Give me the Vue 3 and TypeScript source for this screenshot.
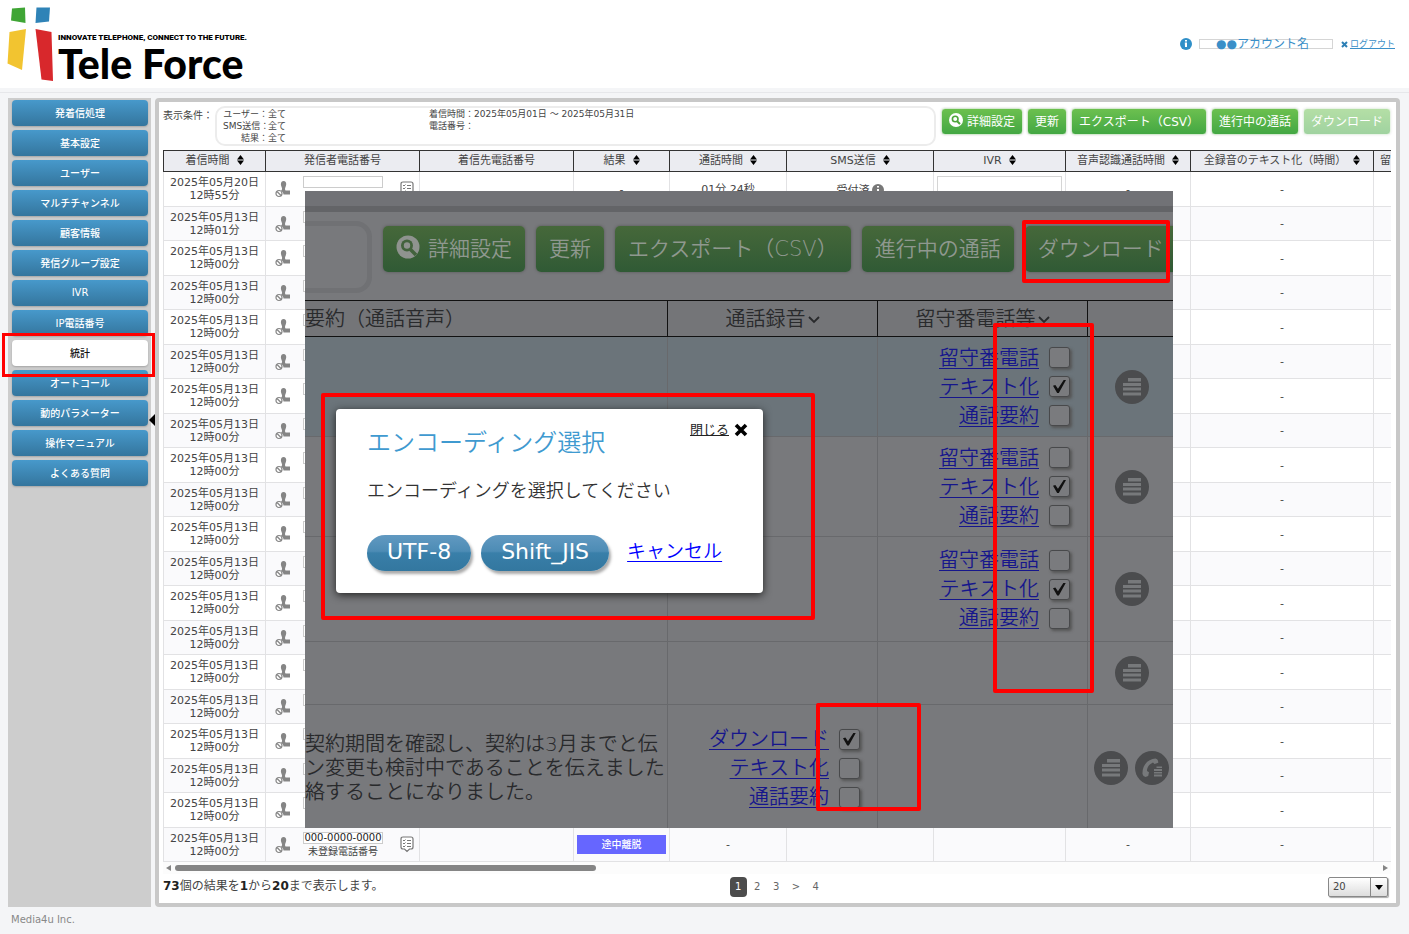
<script setup lang="ts">
import { ref } from 'vue'

interface Column { label: string; cls: string; sort: boolean }
interface CallRow { date: string; time: string; result: string; length: string; speech: string; first?: boolean; last?: boolean }
interface Option { label: string; checked: boolean }
interface PreviewRow { cls: string; summary: string[]; recording: Option[]; voicemail: Option[]; icons: string[] }

const menu: string[] = [
  '発着信処理', '基本設定', 'ユーザー', 'マルチチャンネル', '顧客情報', '発信グループ設定', 'IVR',
  'IP電話番号', '統計', 'オートコール', '動的パラメーター', '操作マニュアル', 'よくある質問',
]
const active = ref('統計')

const columns: Column[] = [
  { label: '着信時間', cls: 'c-time', sort: true },
  { label: '発信者電話番号', cls: 'c-caller', sort: false },
  { label: '着信先電話番号', cls: 'c-callee', sort: false },
  { label: '結果', cls: 'c-result', sort: true },
  { label: '通話時間', cls: 'c-length', sort: true },
  { label: 'SMS送信', cls: 'c-sms', sort: true },
  { label: 'IVR', cls: 'c-ivr', sort: true },
  { label: '音声認識通話時間', cls: 'c-speech', sort: true },
  { label: '全録音のテキスト化（時間）', cls: 'c-text', sort: true },
  { label: '留守番電話等', cls: 'c-voice', sort: false },
]

const empty = { result: '', length: '', speech: '' }
const rows: CallRow[] = [
  { date: '2025年05月20日', time: '12時55分', result: '-', length: '01分 24秒', speech: '-', first: true },
  { date: '2025年05月13日', time: '12時01分', ...empty },
  ...Array.from({ length: 17 }, () => ({ date: '2025年05月13日', time: '12時00分', ...empty })),
  { date: '2025年05月13日', time: '12時00分', result: '途中離脱', length: '-', speech: '-', last: true },
]

const voicemail = (): Option[] => [
  { label: '留守番電話', checked: false },
  { label: 'テキスト化', checked: true },
  { label: '通話要約', checked: false },
]
const preview = ref<PreviewRow[]>([
  { cls: 'r-hit', summary: [], recording: [], voicemail: voicemail(), icons: ['doc'] },
  { cls: 'r-mid', summary: [], recording: [], voicemail: voicemail(), icons: ['doc'] },
  { cls: 'r-tall', summary: [], recording: [], voicemail: voicemail(), icons: ['doc'] },
  { cls: 'r-low', summary: [], recording: [], voicemail: [], icons: ['doc'] },
  {
    cls: 'r-last',
    summary: ['契約期間を確認し、契約は3月までと伝', 'ン変更も検討中であることを伝えました', '絡することになりました。'],
    recording: [
      { label: 'ダウンロード', checked: true },
      { label: 'テキスト化', checked: false },
      { label: '通話要約', checked: false },
    ],
    voicemail: [],
    icons: ['doc', 'tel'],
  },
])
const perPage = ref('20')
</script>

<template>
  <div class="page">
    <header class="header">
      <div class="logo">
        <svg class="logo-mark" width="48" height="76" viewBox="0 0 48 76" aria-hidden="true">
          <path d="M5 3.5 18 2.5 18.500 18 4 15.500Z" fill="#3fa535" />
          <path d="M29.500 2.500H43L42 16.500 28.500 18Z" fill="#2f83b7" />
          <path d="M2.500 27 19 24 15 65 .5 58.500Z" fill="#f2c430" />
          <path d="M28.500 24 44.500 27 46 76 34.500 74.500Z" fill="#d8282c" />
        </svg>
        <div class="logo-text">
          <span class="tagline">INNOVATE TELEPHONE, CONNECT TO THE FUTURE.</span>
          <span class="brand">Tele Force</span>
        </div>
      </div>
      <div class="account">
        <svg width="12" height="12" viewBox="0 0 12 12" aria-hidden="true">
          <circle cx="6" cy="6" r="6" fill="#2f8fc8" />
          <path d="M5 2h2v1.500H5zM4.800 4.500H7V9H5z" fill="#fff" />
        </svg>
        <span class="account-name">●●アカウント名</span>
        <svg class="logout-x" width="7" height="7" viewBox="0 0 7 7" aria-hidden="true">
          <path d="M1 1l5 5M6 1L1 6" stroke="#2c7fb5" stroke-width="2" />
        </svg>
        <a href="#" class="logout">ログアウト</a>
      </div>
    </header>

    <div class="body">
      <nav class="sidebar">
        <button v-for="item in menu" :key="item" type="button" class="menu" :class="{ on: item === active }" @click="active = item">{{ item }}</button>
        <span class="fold"></span>
        <span class="mark mark-menu"></span>
      </nav>

      <main class="main">
        <div class="filter">
          <span class="filter-label">表示条件：</span>
          <div class="filter-box">
            <dl class="conds">
              <dt>ユーザー：</dt><dd>全て</dd>
              <dt>SMS送信：</dt><dd>全て</dd>
              <dt>結果：</dt><dd>全て</dd>
            </dl>
            <dl class="conds">
              <dt>着信時間：</dt><dd>2025年05月01日 ～ 2025年05月31日</dd>
              <dt>電話番号：</dt><dd></dd>
            </dl>
          </div>
          <div class="actions">
            <button type="button" class="green">
              <svg width="14" height="14" viewBox="0 0 14 14" aria-hidden="true">
                <circle cx="7" cy="7" r="7" fill="#fff" />
                <circle cx="6.200" cy="6" r="2.800" fill="none" stroke="#4da53a" stroke-width="1.600" />
                <path d="M8.200 8.200 11 11" stroke="#4da53a" stroke-width="2" />
              </svg>詳細設定
            </button>
            <button type="button" class="green">更新</button>
            <button type="button" class="green">エクスポート（CSV）</button>
            <button type="button" class="green">進行中の通話</button>
            <button type="button" class="green" disabled>ダウンロード</button>
          </div>
        </div>

        <div class="scroller">
          <table class="calls">
            <thead>
              <tr>
                <th v-for="c in columns" :key="c.label" :class="c.cls">
                  {{ c.label }}<svg v-if="c.sort" class="sort" width="7" height="10" viewBox="0 0 7 10" aria-hidden="true"><path d="M3.500 0 7 4.500H0zM0 5.500H7L3.500 10z" fill="#000" /></svg>
                </th>
              </tr>
            </thead>
            <tbody>
              <tr v-for="(r, i) in rows" :key="i">
                <td>{{ r.date }}<br />{{ r.time }}</td>
                <td>
                  <div class="caller">
                    <svg width="16" height="18" viewBox="0 0 16 18" aria-hidden="true">
                      <path d="M8.500 1c2 0 2.900 1.500 2.700 3.500-.2 2-1.200 3-1.200 4.700l.5 1.300h4.500v4H8.500c0-2-1.500-3.300-3-3.500 1.300-.5 1.800-1.500 1.500-2.700C6.500 6.500 5.800 5.600 5.900 4 6 2 7 1 8.500 1z" fill="#858585" />
                      <circle cx="4" cy="13.500" r="3" fill="#fff" stroke="#858585" stroke-width="1.200" />
                      <path d="M2 11.500l4 4" stroke="#858585" stroke-width="1.200" />
                    </svg>
                    <div class="number">
                      <span class="numbox">{{ r.last ? '000-0000-0000' : '' }}</span>
                      <span class="unreg">{{ r.last ? '未登録電話番号' : '' }}</span>
                    </div>
                    <svg width="14" height="17" viewBox="0 0 14 17" aria-hidden="true">
                      <path d="M3 1h8q2 0 2 2v8q0 2-2 2H9.500L7 15.500 4.500 13H3q-2 0-2-2V3q0-2 2-2z" fill="#fff" stroke="#777" stroke-width="1.200" />
                      <path d="M3 4l1 1 1.500-1.500M3 7l1 1 1.500-1.500M3 10l1 1 1.500-1.500M7 4.500h4M7 7.500h4M7 10.500h4" fill="none" stroke="#777" />
                    </svg>
                  </div>
                </td>
                <td></td>
                <td><span v-if="r.last" class="badge">{{ r.result }}</span><template v-else>{{ r.result }}</template></td>
                <td>{{ r.length }}</td>
                <td>
                  <span v-if="r.first" class="sms">受付済
                    <svg width="12" height="12" viewBox="0 0 12 12" aria-hidden="true"><circle cx="6" cy="6" r="6" fill="#777" /><path d="M5 2h2v1.500H5zM5 5h2v5H5z" fill="#fff" /></svg>
                  </span>
                </td>
                <td><span v-if="r.first" class="ivrbox"></span></td>
                <td>{{ r.speech }}</td>
                <td>-</td>
                <td></td>
              </tr>
            </tbody>
          </table>
        </div>
        <div class="hscroll">
          <span class="tri-left"></span>
          <div class="track"><div class="thumb"></div></div>
          <span class="tri-right"></span>
        </div>
        <div class="foot">
          <p class="count"><b>73</b>個の結果を<b>1</b>から<b>20</b>まで表示します。</p>
          <div class="pager">
            <a href="#" class="cur">1</a><a href="#">2</a><a href="#">3</a><a href="#">&gt;</a><a href="#">4</a>
          </div>
          <div class="size">
            <select v-model="perPage" aria-label="表示件数"><option>20</option><option>50</option></select>
            <span class="size-arrow"></span>
          </div>
        </div>
      </main>
    </div>
    <footer class="footer">Media4u Inc.</footer>

    <section class="preview">
      <div class="p-strip"></div>
      <div class="p-tools">
        <div class="p-box"></div>
        <button type="button" class="p-green">
          <svg width="24" height="24" viewBox="0 0 24 24" aria-hidden="true">
            <circle cx="12" cy="12" r="11.500" fill="#8f938f" />
            <circle cx="11" cy="10.500" r="6" fill="#42623c" />
            <circle cx="11" cy="10.500" r="3.200" fill="#8f938f" />
            <path d="M14.500 14.500 20 20" stroke="#42623c" stroke-width="3.500" />
          </svg>詳細設定
        </button>
        <button type="button" class="p-green">更新</button>
        <button type="button" class="p-green">エクスポート（CSV）</button>
        <button type="button" class="p-green">進行中の通話</button>
        <button type="button" class="p-green">ダウンロード</button>
      </div>
      <table class="p-table">
        <thead>
          <tr>
            <th class="p-sum">要約（通話音声）</th>
            <th class="p-rec">通話録音<svg width="12" height="8" viewBox="0 0 12 8" aria-hidden="true"><path d="M1 1l5 5 5-5" fill="none" stroke="#292a2c" stroke-width="1.800" /></svg></th>
            <th class="p-rec">留守番電話等<svg width="12" height="8" viewBox="0 0 12 8" aria-hidden="true"><path d="M1 1l5 5 5-5" fill="none" stroke="#292a2c" stroke-width="1.800" /></svg></th>
            <th></th>
          </tr>
        </thead>
        <tbody>
          <tr v-for="(row, i) in preview" :key="i" :class="row.cls">
            <td class="p-summary"><p v-for="line in row.summary" :key="line">{{ line }}</p></td>
            <td>
              <div v-for="(o, k) in row.recording" :key="o.label" class="opt">
                <a :id="`rec-${i}-${k}`" href="#">{{ o.label }}</a><input v-model="o.checked" type="checkbox" :aria-labelledby="`rec-${i}-${k}`" />
              </div>
            </td>
            <td>
              <div v-for="(o, k) in row.voicemail" :key="o.label" class="opt">
                <a :id="`vm-${i}-${k}`" href="#">{{ o.label }}</a><input v-model="o.checked" type="checkbox" :aria-labelledby="`vm-${i}-${k}`" />
              </div>
            </td>
            <td>
              <div class="rounds">
                <button v-for="ic in row.icons" :key="ic" type="button" class="round" :aria-label="ic === 'doc' ? '詳細' : '通話履歴'">
                  <svg width="34" height="34" viewBox="0 0 34 34" aria-hidden="true">
                    <circle cx="17" cy="17" r="17" fill="#4b4c4e" />
                    <path v-if="ic === 'doc'" d="M13 8h13v3.500H13zM8 13h18v3H8zM8 17.500h18v3H8zM8 22.500h18v3H8z" fill="#77797b" />
                    <g v-else fill="#77797b">
                      <path d="M7.500 23C7 14 13 8 20.500 7.500q2 .3 2.500 2.300l.3 2-3.800 1.200-1.500-1.500c-3.500 1.500-6 4.500-6 8.500l2 1.300-.8 3.700-2.700 1Q8 25.500 7.500 23z" />
                      <path d="M21.500 15.500h5.500v1.500h-5.500zM19 18h8v2h-8zM19 21h8v1.500h-8zM19 23.500h8v2h-8z" />
                    </g>
                  </svg>
                </button>
              </div>
            </td>
          </tr>
        </tbody>
      </table>

      <div class="dialog" role="dialog" aria-labelledby="dlg-title">
        <button type="button" class="close"><span>閉じる</span>
          <svg width="14" height="14" viewBox="0 0 14 14" aria-hidden="true"><path d="M2 2l10 10M12 2L2 12" stroke="#000" stroke-width="3.600" /></svg>
        </button>
        <h2 id="dlg-title">エンコーディング選択</h2>
        <p>エンコーディングを選択してください</p>
        <div class="choices">
          <button type="button" class="pill">UTF-8</button>
          <button type="button" class="pill">Shift_JIS</button>
          <a href="#">キャンセル</a>
        </div>
      </div>

      <span class="mark mark-download"></span>
      <span class="mark mark-voice"></span>
      <span class="mark mark-dialog"></span>
      <span class="mark mark-record"></span>
    </section>
  </div>
</template>

<style>
body { margin: 0; background: #f4f5f7; }
</style>

<style scoped>
* { box-sizing: border-box; }
.page {
  position: relative;
  min-height: 100vh;
  overflow: hidden;
  background: #f4f5f7;
  color: #444;
  font: 11px/13px "DejaVu Sans", "Noto Sans CJK JP", sans-serif;
}
button { font-family: inherit; margin: 0; cursor: pointer; }
p, h2, dl, dd { margin: 0; }

.header { display: flex; justify-content: space-between; height: 88px; padding: 5px 14px 0 7px; background: #fff; }
.logo { display: flex; gap: 3px; }
.logo-text { display: flex; flex-direction: column; padding-top: 27px; color: #000; white-space: nowrap; }
.tagline { font: 900 8px/12px Roboto, "Liberation Sans", sans-serif; }
.brand { font: 900 41px/40px Lato, sans-serif; }
.account { display: flex; align-items: center; height: 12px; margin-top: 33px; color: #3a8fc8; }
.account-name { width: 134px; height: 10px; margin: 0 8px 0 7px; padding-left: 16px; border: 1px solid #d5d5d5; font-size: 12px; line-height: 9px; white-space: nowrap; }
.logout-x { margin-right: 2px; }
.logout { color: #3a8fc8; font-size: 9px; line-height: 12px; }

.body { display: flex; gap: 4px; margin-top: 4px; padding: 5px 9px 0 8px; border-top: 1px solid #e6e7ea; }
.sidebar { position: relative; display: flex; flex-direction: column; gap: 4px; flex: 0 0 143px; padding: 2px 3px 0 4px; background: #cdcdcd; }
.menu { height: 26px; padding: 0 0 2px; border: 0; border-radius: 4px; background: linear-gradient(#4799cb, #34759d); box-shadow: 0 1px 2px rgba(0, 0, 0, .2); color: #fff; font-size: 10px; font-weight: 500; }
.menu.on { background: #fff; color: #111; }
.fold { position: absolute; right: -4px; top: 316px; border: 6px solid transparent; border-left: 0; border-right-color: #000; }

.main { flex: 1; min-width: 0; padding: 4px 5px 4px 4px; border: 4px solid #c8c8c8; border-radius: 4px; background: #fff; }
.filter { display: flex; align-items: flex-start; height: 44px; }
.filter-label { flex: 0 0 52px; padding-top: 3px; white-space: nowrap; font-size: 10px; }
.filter-box { display: flex; flex: 1; height: 40px; padding: 0 6px; border: 2px solid #ececec; border-radius: 10px; font-size: 9px; line-height: 12px; }
.conds { display: grid; grid-template-columns: 45px auto; grid-auto-rows: 12px; align-content: start; flex: 0 0 206px; white-space: nowrap; }
.conds dt { text-align: right; }
.actions { display: flex; gap: 4px; padding: 2px 0 0 5px; }
.green { display: flex; align-items: center; gap: 4px; height: 27px; padding: 0 7px 3px; border: 1px solid #d5ead0; border-radius: 4px; background: linear-gradient(#6cc04f, #43a743); box-shadow: 0 0 2px rgba(0, 0, 0, .2); color: #fff; font-size: 12px; white-space: nowrap; }
.green:disabled { opacity: .5; }

.scroller { overflow: hidden; }
.calls { width: 1411px; border-collapse: separate; border-spacing: 0; table-layout: fixed; }
.calls th { height: 22px; padding: 0 0 1px; border: solid #333; border-width: 1px 1px 1px 0; background: #ebecf1; font-weight: 400; white-space: nowrap; }
.calls th:first-child { border-left-width: 1px; }
.calls td { height: 34px; padding: 0; border: solid #e2e2e4; border-width: 0 1px 1px 0; text-align: center; }
.calls td:first-child { border-left-width: 1px; }
.calls tr:nth-child(odd) td { height: 35px; }
.calls tr:nth-child(even) td { background: #fafafc; }
.sort { margin-left: 7px; vertical-align: -1px; }
.c-time { width: 103px; }
.c-caller, .c-callee { width: 154px; }
.c-result { width: 96px; }
.c-length { width: 117px; }
.c-sms { width: 147px; }
.c-ivr { width: 132px; }
.c-speech { width: 125px; }
.c-text { width: 183px; }
.calls .c-voice { padding-left: 6px; text-align: left; }
.caller { display: flex; align-items: center; padding: 0 5px 0 9px; }
.number { display: flex; flex-direction: column; flex: 0 0 80px; margin: 0 17px 0 12px; }
.numbox { height: 12px; border: 1px solid #ccc; background: #fff; color: #222; font-size: 10px; line-height: 10px; white-space: nowrap; }
.unreg { height: 14px; padding-top: 2px; font-size: 10px; line-height: 12px; }
.badge { display: block; margin: 0 3px; background: #66f; color: #fff; font-size: 10px; font-weight: 500; line-height: 19px; }
.sms { display: flex; align-items: center; justify-content: center; gap: 2px; padding-top: 2px; }
.ivrbox { display: block; height: 26px; margin: 0 3px; border: 1px solid #d5d5d5; background: #fff; }

.hscroll { display: flex; align-items: center; gap: 4px; height: 12px; padding: 0 3px; background: #fcfcfc; }
.track { flex: 1; }
.thumb { width: 35%; height: 6px; border-radius: 3px; background: #858585; }
.tri-left { border: 3px solid transparent; border-left: 0; border-right: 5px solid #858585; }
.tri-right { border: 3px solid transparent; border-right: 0; border-left: 5px solid #858585; }
.foot { display: grid; grid-template-columns: 1fr auto 1fr; align-items: center; height: 25px; }
.count { font-size: 12px; }
.count b { color: #222; }
.pager { display: flex; gap: 2px; font-size: 10px; }
.pager a { padding: 4px 5px; border-radius: 4px; color: #666; text-decoration: none; line-height: 12px; min-width: 17px; text-align: center; }
.pager .cur { background: #4c4c4c; color: #fff; }
.size { position: relative; justify-self: end; margin-right: 3px; }
.size select { display: block; width: 60px; height: 20px; padding: 0 4px; appearance: none; border: 1px solid #888; border-radius: 2px; background: linear-gradient(#fff, #ddd); box-shadow: 1px 1px 1px #aaa; color: #444; font: 10px "DejaVu Sans", sans-serif; }
.size-arrow { position: absolute; right: 1px; top: 1px; width: 17px; height: 18px; border-left: 1px solid #888; pointer-events: none; }
.size-arrow::after { content: ""; position: absolute; left: 4px; top: 7px; border: 4px solid transparent; border-bottom: 0; border-top: 5px solid #000; }
.footer { padding: 6px 11px; color: #888; font-size: 10px; }

/* enlarged view of the recording columns, dimmed behind the dialog */
.preview { position: absolute; left: 305px; top: 191px; width: 868px; height: 637px; overflow: hidden; background: #78797c; color: #292a2c; font-size: 20px; font-weight: 350; line-height: 24px; }
.p-strip { height: 21px; border-bottom: 6px solid #636467; background: #717276; }
.p-tools { display: flex; align-items: flex-start; gap: 11px; height: 88px; padding-top: 14px; }
.p-box { flex: 0 0 67px; height: 72px; margin-top: -5px; border: 5px solid #707174; border-left: 0; border-radius: 0 16px 16px 0; }
.p-green { display: flex; align-items: center; flex: none; gap: 8px; height: 46px; padding: 0 13px 5px; border: 0; border-radius: 5px; background: linear-gradient(#46683a, #305a35); box-shadow: 0 0 3px #555; color: #8f988f; font-size: 21px; font-weight: 350; white-space: nowrap; }
.p-table { width: 868px; table-layout: fixed; border-collapse: separate; border-spacing: 0; }
.p-table th { height: 37px; padding: 0; border: solid #111; border-width: 1px 1px 1px 0; background: #747578; font-weight: 350; }
.p-table th svg { margin-left: 2px; vertical-align: 2px; }
.p-table th:last-child, .p-table td:last-child { border-right: 0; }
.p-table .p-sum { width: 363px; text-align: left; }
.p-table .p-rec { width: 210px; }
.p-table td { padding: 0; border: solid #68696c; border-width: 0 1px 1px 0; }
.p-table .r-hit td { height: 100px; background: #6b747a; }
.r-mid td { height: 100px; }
.r-tall td { height: 105px; }
.r-low td { height: 63px; }
.r-last td { height: 127px; }
.p-summary { white-space: nowrap; }
.opt { display: flex; align-items: center; justify-content: flex-end; gap: 10px; height: 29px; padding-right: 17px; }
.opt a { color: #16168c; line-height: 24px; text-decoration-thickness: 1px; text-underline-offset: 3px; }
.opt input { display: grid; place-items: center; width: 21px; height: 21px; margin: 0; appearance: none; border: 1px solid #48494b; border-radius: 3px; background: #7a7b7e; box-shadow: 2px 2px 3px #555; }
.opt input:checked::after { content: ""; width: 13px; height: 13px; background: #111; clip-path: polygon(0 45%, 18% 38%, 38% 68%, 82% 0, 100% 0, 45% 100%, 32% 100%); }
.rounds { display: flex; justify-content: center; gap: 7px; padding-left: 2px; }
.round { display: flex; padding: 0; border: 0; background: none; }

.dialog { position: absolute; left: 31px; top: 218px; width: 427px; padding: 20px 31px 22px; border-radius: 4px; background: #fff; box-shadow: 0 2px 8px #222; color: #333; }
.close { position: absolute; right: 15px; top: 11px; display: flex; align-items: center; gap: 5px; padding: 0; border: 0; background: none; color: #222; font-size: 13px; line-height: 20px; text-decoration: underline; }
.dialog h2 { color: #3f9ad0; font-size: 24px; font-weight: 350; line-height: 28px; }
.dialog p { margin-top: 22px; font-size: 18px; line-height: 24px; white-space: nowrap; }
.choices { display: flex; align-items: center; gap: 10px; margin-top: 32px; }
.pill { height: 36px; padding: 0 20px 4px; border: 0; border-radius: 18px; background: linear-gradient(#6199c1 0, #4d8cb5 45%, #397fa9 50%, #33779f 100%); box-shadow: 2px 3px 3px #aaa; color: #fff; font-size: 22px; }
.choices a { margin: 0 0 4px 8px; color: #00f; font-size: 19px; text-decoration-thickness: 1px; text-underline-offset: 3px; }

.mark { position: absolute; border: 4px solid #f00; border-radius: 2px; pointer-events: none; }
.mark-menu { left: -6px; top: 235px; width: 153px; height: 44px; border-width: 3px; border-radius: 0; }
.mark-download { left: 717px; top: 29px; width: 148px; height: 63px; }
.mark-voice { left: 688px; top: 132px; width: 101px; height: 370px; }
.mark-dialog { left: 16px; top: 202px; width: 494px; height: 227px; }
.mark-record { left: 511px; top: 512px; width: 105px; height: 108px; }
</style>
